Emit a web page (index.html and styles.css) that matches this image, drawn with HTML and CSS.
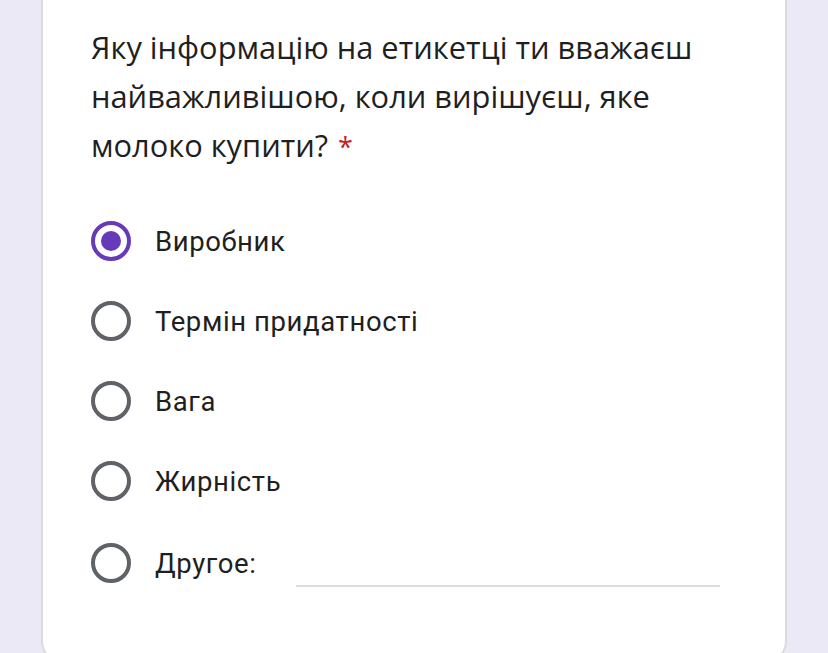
FILE: index.html
```html
<!DOCTYPE html>
<html lang="uk">
<head>
<meta charset="utf-8">
<link rel="stylesheet" href="styles.css">
</head>
<body>
<div class="card">
  <div class="question">Яку інформацію на етикетці ти вважаєш найважливішою, коли вирішуєш, яке молоко купити? <span class="req">*</span></div>
  <div class="options">
    <div class="opt"><span class="radio checked"></span><span class="label">Виробник</span></div>
    <div class="opt"><span class="radio"></span><span class="label">Термін придатності</span></div>
    <div class="opt"><span class="radio"></span><span class="label">Вага</span></div>
    <div class="opt"><span class="radio"></span><span class="label">Жирність</span></div>
    <div class="opt other"><span class="radio"></span><span class="label">Другое:</span><span class="line"></span></div>
  </div>
</div>
</body>
</html>
```
FILE: styles.css
```css
html, body { margin: 0; padding: 0; }
body {
  background: #ece9f6;
  width: 828px;
  height: 653px;
  overflow: hidden;
}
.card {
  box-sizing: border-box;
  margin-left: 41px;
  width: 746px;
  height: 663px;
  background: #fff;
  border: 2px solid #dcdadf;
  border-top: none;
  border-radius: 0 0 22px 22px;
  padding: 23px 40px 0 48px;
}
.question {
  font-family: "Open Sans", sans-serif;
  font-size: 30.8px;
  line-height: 49px;
  color: #1f1f1f;
  width: 640px;
}
.req {
  color: #c5221f;
  font-size: 27px;
  line-height: 1;
  margin-left: 2px;
}
.options {
  margin-top: 31px;
  display: flex;
  flex-direction: column;
}
.opt {
  display: flex;
  align-items: center;
  height: 80px;
  font-family: Roboto, sans-serif;
  font-size: 27.5px;
  color: #1f1f1f;
  letter-spacing: 0.6px;
}
.radio {
  box-sizing: border-box;
  width: 40px;
  height: 40px;
  border-radius: 50%;
  border: 4px solid #5f6368;
  margin-right: 24px;
  flex: none;
  display: flex;
  align-items: center;
  justify-content: center;
}
.radio.checked { border-color: #673ab7; }
.radio.checked::after {
  content: "";
  width: 20px;
  height: 20px;
  border-radius: 50%;
  background: #673ab7;
}
.other { height: 84px; }
.line {
  margin-left: 40px;
  align-self: flex-end;
  margin-bottom: 18px;
  width: 424px;
  height: 2px;
  background: #dadce0;
}
```
